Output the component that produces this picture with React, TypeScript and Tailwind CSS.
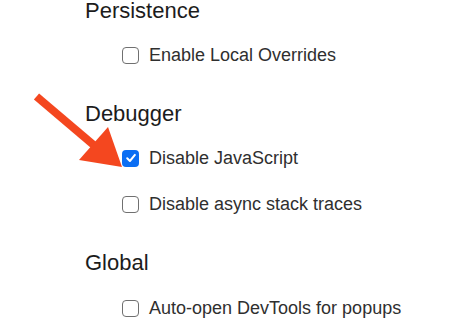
import React from "react";

function Box({ checked }: { checked?: boolean }) {
  if (checked) {
    return (
      <span className="flex h-[17px] w-[17px] shrink-0 items-center justify-center rounded-[4px] bg-[#0b6ef3]">
        <svg width="12" height="12" viewBox="0 0 12 12" fill="none">
          <path d="M2.2 6.3 L4.9 9 L9.9 2.9" stroke="white" strokeWidth="2" strokeLinecap="round" strokeLinejoin="round" />
        </svg>
      </span>
    );
  }
  return <span className="h-[17px] w-[17px] shrink-0 rounded-[4px] border-[1.5px] border-[#707070] bg-white" />;
}

function Row({ label, checked, className }: { label: string; checked?: boolean; className: string }) {
  return (
    <div className={`flex h-[20px] items-center gap-[10px] pl-[37px] ${className}`}>
      <Box checked={checked} />
      <span className="text-[18px] leading-[20px] text-[#2f2f2f]">{label}</span>
    </div>
  );
}

function Heading({ text, className }: { text: string; className: string }) {
  return <div className={`text-[22px] leading-[22px] text-[#1c1c1c] ${className}`}>{text}</div>;
}

export default function App() {
  return (
    <div
      className="relative h-[327px] w-[474px] overflow-hidden bg-white pl-[85px]"
      style={{ fontFamily: '"Liberation Sans", Arial, sans-serif' }}
    >
      <div className="flex flex-col">
        <Heading text="Persistence" className="mt-0" />
        <Row label="Enable Local Overrides" className="mt-[23px]" />
        <Heading text="Debugger" className="mt-[38px]" />
        <Row label="Disable JavaScript" checked className="mt-[23px]" />
        <Row label="Disable async stack traces" className="mt-[26px]" />
        <Heading text="Global" className="mt-[38px]" />
        <Row label="Auto-open DevTools for popups" className="mt-[24px]" />
      </div>
      <svg className="pointer-events-none absolute left-0 top-0" width="474" height="327" viewBox="0 0 474 327">
        <line x1="36.5" y1="96.5" x2="96" y2="147" stroke="#f4471f" strokeWidth="8" />
        <polygon points="79,160 108,127 122,167" fill="#f4471f" />
      </svg>
    </div>
  );
}
